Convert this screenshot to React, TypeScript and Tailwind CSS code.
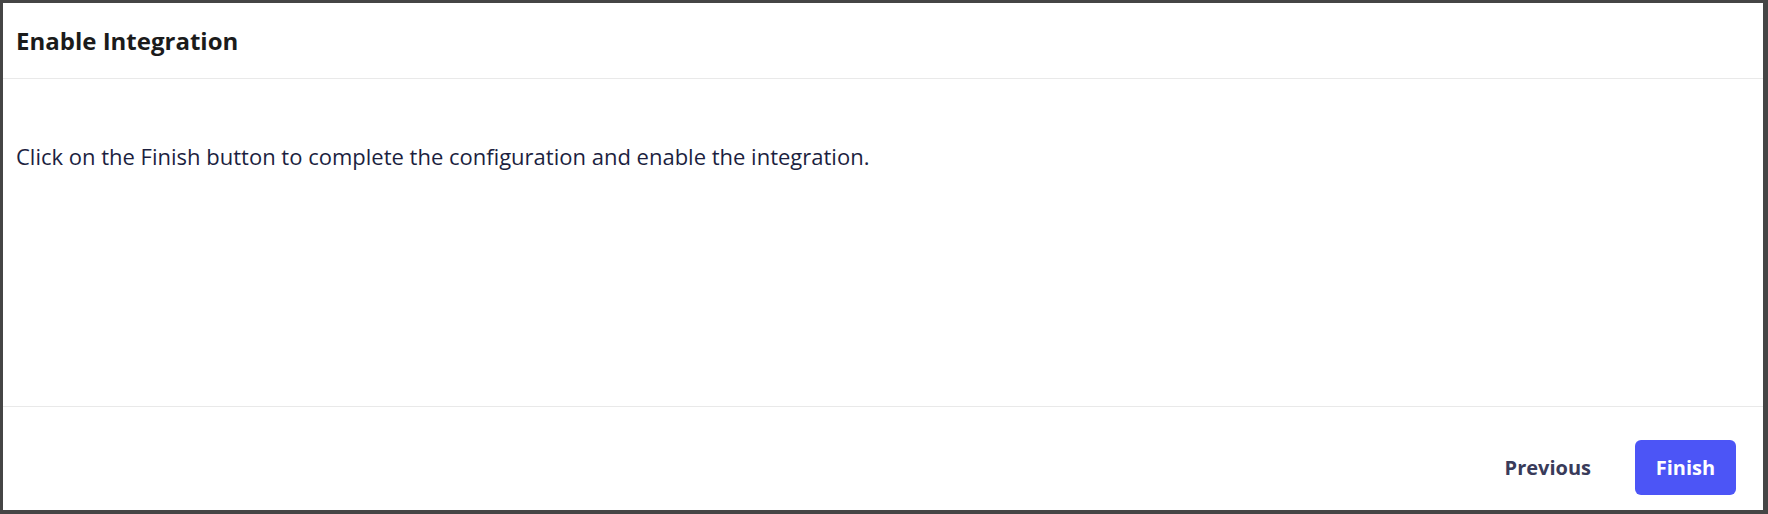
import React from "react";

export default function App() {
  return (
    <div
      className="flex h-[514px] w-full flex-col border-b-[4px] border-l-[3px] border-r-[5px] border-t-[3px] border-[#454545] bg-white"
      style={{ fontFamily: '"Open Sans", "Noto Sans", sans-serif' }}
    >
      <div className="flex h-[76px] items-center border-b border-[#e9e9e9] pl-[13px]">
        <h1 className="text-[24px] font-bold text-[#1b1b1b]">Enable Integration</h1>
      </div>
      <div className="flex-1 pl-[13px] pt-[66px]">
        <p className="text-[22px] leading-none text-[#1c1f3f]">
          Click on the Finish button to complete the configuration and enable the integration.
        </p>
      </div>
      <div className="flex items-start justify-end gap-[32px] border-t border-[#e9e9e9] pb-[15px] pr-[27px] pt-[33px]">
        <button className="flex h-[55px] items-center px-[12px] text-[20px] font-bold text-[#393b5a]">
          Previous
        </button>
        <button className="flex h-[55px] w-[101px] items-center justify-center rounded-[6px] bg-[#4c55f6] text-[20px] font-bold text-white">
          Finish
        </button>
      </div>
    </div>
  );
}
